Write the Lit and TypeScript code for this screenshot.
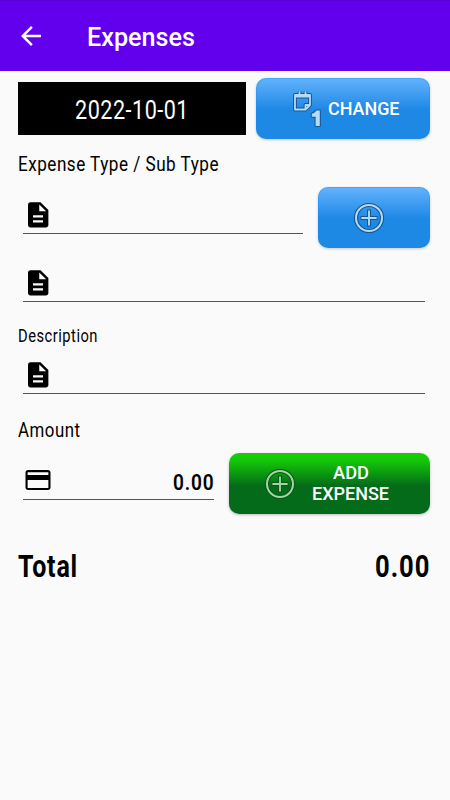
import { LitElement, html, css, svg } from "lit";
import { customElement, property } from "lit/decorators.js";

/** A single line of text set in a condensed width. */
@customElement("condensed-text")
class CondensedText extends LitElement {
  @property() text = "";
  @property({ type: Number }) size = 20;
  @property({ type: Number }) weight = 400;
  @property({ type: Number }) width = 100;
  @property({ type: Number }) tracking = 0.6;

  static styles = css`
    :host { display: block; flex: none; line-height: 0; }
    svg { display: block; overflow: visible; }
    text { font-family: Roboto, "Liberation Sans", sans-serif; fill: currentColor; }
  `;

  render() {
    const h = Math.round(this.size * 1.2);
    return html`<svg width=${this.width} height=${h}>
      <text x="0" y=${h - 5} font-size=${this.size} font-weight=${this.weight} letter-spacing=${this.tracking}
        textLength=${this.width} lengthAdjust="spacingAndGlyphs">${this.text}</text>
    </svg>`;
  }
}

const plusIcon = html`<svg class="plus" width="32" height="32" viewBox="0 0 32 32" fill="none">
  <g class="edge"><circle cx="16" cy="16" r="13" stroke-width="4.2" /><path d="M16 7.6V24.4M7.6 16H24.4" stroke-width="4" /></g>
  <g class="face"><circle cx="16" cy="16" r="13" stroke-width="2" /><path d="M16 8.4V23.6M8.4 16H23.6" stroke-width="1.9" /></g>
</svg>`;

const calendarShape = svg`<path d="M3 5H18V15L13.500 19.500H3ZM3 6.500H18M7.500 1.500V5M13.500 1.500V5M17.500 15H13.500V19" />`;

const calendarIcon = html`<svg width="32" height="38" viewBox="0 0 32 38" fill="none" stroke-linejoin="round">
  <g class="edge" stroke-width="3.8">${calendarShape}</g>
  <g class="face" stroke-width="1.8">${calendarShape}</g>
  <path class="digit-edge" d="M19.800 23.700C22 23 23.500 22 24.300 20.400H27.800V36H23.600V26.700H19.800Z" />
  <path class="digit" d="M19.800 23.700C22 23 23.500 22 24.300 20.400H27.800V36H23.600V26.700H19.800Z" />
</svg>`;

const documentIcon = html`<svg width="30" height="30" viewBox="0 0 24 24">
  <path d="M14 1.700H6c-1.100 0-2 .9-2 2V20c0 1.100.9 2 2 2H18.300c1.100 0 2-.9 2-2V8zM16 17.900H8v-1.800h8v1.800zm0-4H8v-1.800h8v1.800zM13 9V3.500L18.500 9H13z" />
</svg>`;

const cardIcon = html`<svg width="30" height="30" viewBox="0 0 24 24">
  <path d="M20 4H4c-1.110 0-1.990.89-1.990 2L2 18c0 1.110.89 2 2 2h16c1.110 0 2-.89 2-2V6c0-1.110-.89-2-2-2zm.3 14.300H3.700v-6.300h16.600v6.300zm0-10.300H3.700V5.700h16.600v2.300z" />
</svg>`;

@customElement("app-root")
class AppRoot extends LitElement {
  static styles = css`
    :host {
      display: block;
      height: 800px;
      background: #fafafa;
      color: #000;
      font-family: Roboto, "Liberation Sans", sans-serif;
      overflow: hidden;
    }
    * { box-sizing: border-box; }
    header {
      height: 71px;
      background: #6200ee;
      border-top: 1px solid #5800d6;
      color: #fff;
      display: flex;
      align-items: center;
      padding: 0 0 1px 16px;
      gap: 41px;
    }
    svg { display: block; flex: none; }
    main { padding: 7px 20px 0 18px; }
    .row { display: flex; justify-content: space-between; }
    .date {
      width: 228px;
      height: 53px;
      margin-top: 4px;
      background: #000;
      color: #fff;
      display: flex;
      justify-content: center;
      padding-top: 11px;
    }
    button {
      height: 61px;
      border: 0;
      border-radius: 10px;
      padding: 0;
      color: #fff;
      display: flex;
      align-items: center;
      flex: none;
      background: linear-gradient(#64b3fd 0%, #1e88e5 52%, #1e88e5 100%);
      box-shadow: 0 1px 3px rgba(0, 0, 0, 0.2), inset 0 0 0 1px rgba(20, 145, 250, 0.35);
    }
    .change { width: 174px; padding-left: 36px; gap: 3.500px; }
    .change condensed-text { padding-top: 1px; }
    .more { width: 112px; padding-left: 35px; }
    .add {
      width: 201px;
      padding-left: 35px;
      gap: 16px;
      background: linear-gradient(#14d005 0%, #14c808 12%, #046b1a 54%, #046b1a 100%);
      box-shadow: 0 1px 3px rgba(0, 0, 0, 0.25);
    }
    .lines { display: flex; flex-direction: column; align-items: center; padding-bottom: 1px; }
    .lines condensed-text { height: 21px; }
    .edge { stroke: #155793; }
    .face { stroke: #b5daf8; }
    .digit-edge { stroke: #155793; stroke-width: 2; }
    .digit { fill: #b5daf8; }
    .add .edge { stroke: #075c14; }
    .add .face { stroke: #a5d3a5; }
    .field {
      height: 34px;
      margin-left: 5px;
      border-bottom: 1px solid #555;
      display: flex;
      justify-content: space-between;
    }
    .type { width: 280px; margin-top: 13px; }
    .wide { width: 402px; }
    .amount { width: 191px; height: 35px; margin-top: 12px; }
    .amount condensed-text { margin-top: 3px; }
    .type-label { height: 48px; padding: 12px 0 0; }
    .sub { margin-top: 20px; }
    .desc-label { padding-top: 24px; height: 58px; }
    .amount-label { padding-top: 24px; height: 59px; }
    .total { padding-top: 31px; }
  `;

  private text(value: string, size: number, width: number, weight = 400, tracking = 0.6) {
    return html`<condensed-text .text=${value} .size=${size} .width=${width} .weight=${weight}
      .tracking=${tracking}></condensed-text>`;
  }

  render() {
    return html`
      <header>
        <svg width="30" height="30" viewBox="0 0 24 24" fill="#fff">
          <path d="M20 11H7.830l5.590-5.590L12 4l-8 8 8 8 1.410-1.410L7.830 13H20v-2z" />
        </svg>
        ${this.text("Expenses", 25, 108, 500, 0)}
      </header>
      <main>
        <div class="row">
          <div class="date">${this.text("2022-10-01", 26, 114)}</div>
          <button class="change">${calendarIcon}${this.text("CHANGE", 18, 71.5, 500, 0)}</button>
        </div>
        <div class="type-label">${this.text("Expense Type / Sub Type", 20.5, 201)}</div>
        <div class="row">
          <div class="field type">${documentIcon}</div>
          <button class="more" aria-label="Add type">${plusIcon}</button>
        </div>
        <div class="field wide sub">${documentIcon}</div>
        <div class="desc-label">${this.text("Description", 17.8, 80)}</div>
        <div class="field wide">${documentIcon}</div>
        <div class="amount-label">${this.text("Amount", 20, 62.5)}</div>
        <div class="row">
          <div class="field amount">${cardIcon}${this.text("0.00", 22.5, 41.5, 600, 1)}</div>
          <button class="add">
            ${plusIcon}
            <span class="lines">
              ${this.text("ADD", 18, 36, 500, 0)}${this.text("EXPENSE", 18, 77, 500, 0)}
            </span>
          </button>
        </div>
        <div class="row total">
          ${this.text("Total", 30.5, 60, 700, 1)}${this.text("0.00", 30.5, 55.5, 700, 1.2)}
        </div>
      </main>
    `;
  }
}
